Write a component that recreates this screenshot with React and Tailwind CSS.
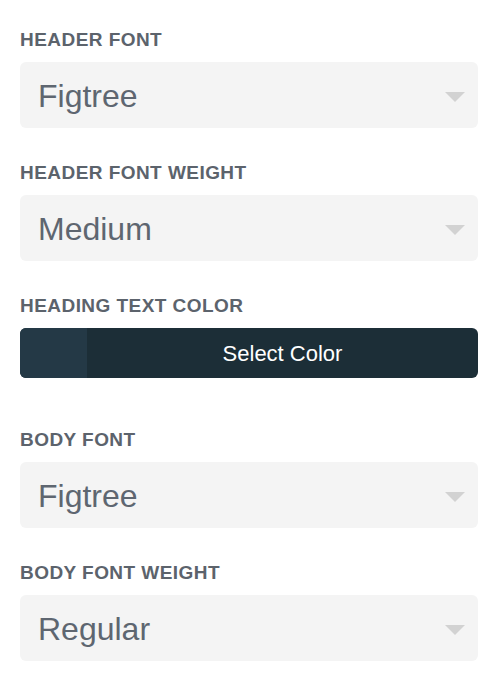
import { useState } from "react";

const font = { fontFamily: '"Liberation Sans", Arial, sans-serif' };

const Label = ({ children }) => (
  <div className="text-[19px] leading-6 font-bold uppercase tracking-[0.45px] text-[#5c636c]">{children}</div>
);

const FakeSelect = ({ value }) => (
  <div className="mt-[10px] h-[66px] rounded-[6px] bg-[#f4f4f4] flex items-center pl-[18px] pr-[13px]">
    <span className="flex-1 text-[32px] text-[#5e6670] pt-[2px]">{value}</span>
    <svg width="20" height="10" viewBox="0 0 20 10" className="mt-[4px]">
      <path d="M0 0h20L10 10z" fill="#d2d2d2" />
    </svg>
  </div>
);

const ColorButton = ({ color }) => (
  <button className="mt-[10px] mb-[17px] w-full h-[50px] rounded-[6px] bg-[#1c2e37] flex overflow-hidden">
    <span className="w-[67px] h-full shrink-0" style={{ backgroundColor: color }} />
    <span className="flex-1 h-full flex items-center justify-center text-[22px] text-white">Select Color</span>
  </button>
);

export default function App() {
  const [headingColor] = useState("#243946");

  return (
    <div className="w-[498px] min-h-[690px] bg-white px-5 pt-7 flex flex-col gap-[33px]" style={font}>
      <div>
        <Label>Header Font</Label>
        <FakeSelect value="Figtree" />
      </div>
      <div>
        <Label>Header Font Weight</Label>
        <FakeSelect value="Medium" />
      </div>
      <div>
        <Label>Heading Text Color</Label>
        <ColorButton color={headingColor} />
      </div>
      <div>
        <Label>Body Font</Label>
        <FakeSelect value="Figtree" />
      </div>
      <div>
        <Label>Body Font Weight</Label>
        <FakeSelect value="Regular" />
      </div>
    </div>
  );
}
